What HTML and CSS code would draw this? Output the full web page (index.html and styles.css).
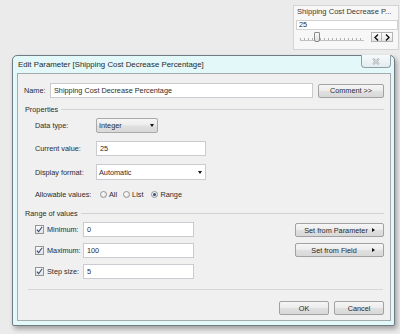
FILE: index.html
```html
<!DOCTYPE html>
<html>
<head>
<meta charset="utf-8">
<link rel="stylesheet" href="styles.css">
</head>
<body>
<div class="page">
  <div class="widget">
    <div class="w-title">Shipping Cost Decrease P...</div>
    <div class="w-input">25</div>
    <div class="w-slider-row">
      <div class="w-slider">
        <div class="w-ticks"></div>
        <div class="w-thumb"></div>
      </div>
      <div class="w-btns">
        <span class="w-btn"><svg width="5" height="7" viewBox="0 0 5 7"><path d="M4 0.5 L1 3.5 L4 6.5" fill="none" stroke="#111" stroke-width="1.4"/></svg></span>
        <span class="w-btn"><svg width="5" height="7" viewBox="0 0 5 7"><path d="M1 0.5 L4 3.5 L1 6.5" fill="none" stroke="#111" stroke-width="1.4"/></svg></span>
      </div>
    </div>
  </div>

  <div class="dialog">
    <div class="titlebar">
      <span class="title">Edit Parameter [Shipping Cost Decrease Percentage]</span>
      <span class="close"><svg width="8" height="7" viewBox="0 0 8 7"><path d="M1 0.8 L7 6.2 M7 0.8 L1 6.2" fill="none" stroke="#a9aeb1" stroke-width="2"/><path d="M1 0.8 L7 6.2 M7 0.8 L1 6.2" fill="none" stroke="#f2f5f6" stroke-width="0.7"/></svg></span>
    </div>
    <div class="content">
      <div class="name-row">
        <span class="name-label">Name:</span>
        <span class="field name-input">Shipping Cost Decrease Percentage</span>
        <span class="btn comment-btn">Comment &gt;&gt;</span>
      </div>

      <div class="group-head props-head"><span>Properties</span></div>

      <div class="prop-row dtype-row">
        <span class="plabel">Data type:</span>
        <span class="combo combo-btn dtype">Integer<i class="caret"></i></span>
      </div>
      <div class="prop-row cur-row">
        <span class="plabel">Current value:</span>
        <span class="field cur-input">25</span>
      </div>
      <div class="prop-row fmt-row">
        <span class="plabel">Display format:</span>
        <span class="combo combo-white fmt">Automatic<i class="caret"></i></span>
      </div>
      <div class="prop-row allow-row">
        <span class="plabel">Allowable values:</span>
        <span class="radio"></span><span class="rlabel r-all">All</span>
        <span class="radio"></span><span class="rlabel r-list">List</span>
        <span class="radio on"></span><span class="rlabel">Range</span>
      </div>

      <div class="group-head range-head"><span>Range of values</span></div>

      <div class="range">
        <div class="range-left">
          <div class="crow">
            <span class="cbox"><svg width="7" height="7" viewBox="0 0 7 7"><path d="M0.9 3.7 L2.6 5.7 L6.2 0.7" fill="none" stroke="#34497a" stroke-width="1.1"/></svg></span>
            <span class="clabel">Minimum:</span>
            <span class="field rinput">0</span>
          </div>
          <div class="crow">
            <span class="cbox"><svg width="7" height="7" viewBox="0 0 7 7"><path d="M0.9 3.7 L2.6 5.7 L6.2 0.7" fill="none" stroke="#34497a" stroke-width="1.1"/></svg></span>
            <span class="clabel">Maximum:</span>
            <span class="field rinput">100</span>
          </div>
          <div class="crow">
            <span class="cbox"><svg width="7" height="7" viewBox="0 0 7 7"><path d="M0.9 3.7 L2.6 5.7 L6.2 0.7" fill="none" stroke="#34497a" stroke-width="1.1"/></svg></span>
            <span class="clabel">Step size:</span>
            <span class="field rinput">5</span>
          </div>
        </div>
        <div class="range-right">
          <span class="btn set-btn set-param"><span class="set-text">Set from Parameter</span><i class="tri"></i></span>
          <span class="btn set-btn set-field"><span class="set-text">Set from Field</span><i class="tri"></i></span>
        </div>
      </div>

      <div class="sep"></div>

      <div class="footer">
        <span class="btn foot-btn">OK</span>
        <span class="btn foot-btn">Cancel</span>
      </div>
    </div>
  </div>
</div>
</body>
</html>
```

FILE: styles.css
```css
* { box-sizing: border-box; }
html, body { margin: 0; padding: 0; }
body {
  width: 400px;
  height: 334px;
  overflow: hidden;
  background: #ebebeb;
  font-family: "Liberation Sans", Arial, sans-serif;
  font-size: 7.3px;
  color: #2c2c2c;
}
.page { padding-top: 5px; }

/* ---------- top-right parameter widget ---------- */
.widget {
  margin-left: 293px;
  width: 106px;
  height: 45px;
  background: #f7f7f7;
  border: 1px solid #d4d4d4;
  padding: 0 0 0 2px;
}
.w-title {
  height: 11px;
  line-height: 11px;
  padding-left: 1px;
  font-size: 7.6px;
  color: #3a3a3a;
  white-space: nowrap;
}
.w-input {
  margin-top: 3px;
  width: 102px;
  height: 10px;
  line-height: 8px;
  padding-left: 2px;
  background: #fff;
  border: 1px solid #d2d2d2;
}
.w-slider-row {
  margin-top: 2px;
  height: 10px;
  display: flex;
  align-items: center;
}
.w-slider {
  position: relative;
  margin-left: 4px;
  width: 64px;
  height: 10px;
}
.w-ticks {
  margin-top: 6px;
  height: 3px;
  border-bottom: 1px solid #c0c0c0;
  background: repeating-linear-gradient(90deg, #b0b0b0 0 1px, transparent 1px 4px);
}
.w-thumb {
  position: absolute;
  left: 14px;
  top: 0;
  width: 6px;
  height: 10px;
  border: 1px solid #8a8a8a;
  border-radius: 1px 1px 2px 2px;
  background: linear-gradient(#fbfbfb, #dedede);
}
.w-btns {
  margin-left: 7px;
  display: flex;
}
.w-btn {
  width: 11px;
  height: 10px;
  display: flex;
  align-items: center;
  justify-content: center;
  border: 1px solid #b4b4b4;
  background: linear-gradient(#ffffff, #e4e4e4);
}
.w-btn + .w-btn { border-left: none; }

/* ---------- dialog ---------- */
.dialog {
  margin: 5px 0 0 12px;
  width: 383px;
  height: 271px;
  border: 1px solid #6f7c82;
  border-radius: 5px 5px 2px 2px;
  background: #e2f8f9;
  box-shadow: 2px 3px 5px rgba(0, 0, 0, 0.32);
  padding: 0 3px 4px 4px;
  display: flex;
  flex-direction: column;
}
.titlebar {
  height: 17px;
  display: flex;
  align-items: flex-start;
}
.title {
  padding-left: 1px;
  line-height: 17px;
  font-size: 7.85px;
  color: #2a2a2a;
  white-space: nowrap;
}
.close {
  margin-left: auto;
  margin-top: -1px;
  width: 30px;
  height: 13px;
  border: 1px solid #929ea4;
  border-top: none;
  border-radius: 0 0 4px 4px;
  background: linear-gradient(#f5fbfc, #e3ecef);
  display: flex;
  align-items: center;
  justify-content: center;
}
.content {
  height: 248px;
  border: 1px solid #a3abaf;
  background: #f0f0f0;
  padding-top: 9px;
  display: flex;
  flex-direction: column;
}

/* generic controls */
.field {
  height: 15px;
  background: #fff;
  border: 1px solid #c9cbd0;
  display: flex;
  align-items: center;
  white-space: nowrap;
}
.btn {
  display: flex;
  align-items: center;
  justify-content: center;
  height: 14px;
  border: 1px solid #a2a2a2;
  border-radius: 2px;
  background: linear-gradient(#f6f6f6 0%, #ececec 48%, #e0e0e0 52%, #d8d8d8 100%);
  color: #2a2a2a;
  white-space: nowrap;
}

/* name row */
.name-row {
  height: 15px;
  display: flex;
  align-items: center;
}
.name-label {
  width: 32px;
  padding-left: 6px;
}
.name-input {
  width: 263px;
  padding-left: 3px;
}
.comment-btn {
  margin-left: 5px;
  width: 66px;
}

/* group header */
.group-head {
  width: 366px;
  height: 10px;
  padding-left: 7px;
  display: flex;
  align-items: center;
  white-space: nowrap;
}
.group-head::after {
  content: "";
  flex: 1;
  margin-left: 3px;
  border-top: 1px solid #d3d3d3;
}
.props-head { margin-top: 6px; }
.range-head { margin-top: 8px; }

/* property rows */
.prop-row {
  height: 15px;
  display: flex;
  align-items: center;
}
.plabel {
  width: 78px;
  padding-left: 17px;
  white-space: nowrap;
}
.dtype-row { margin-top: 4px; }
.cur-row { margin-top: 8px; }
.fmt-row { margin-top: 8px; height: 16px; }
.allow-row { margin-top: 9px; height: 11px; }
.allow-row .plabel { width: 82px; }

.combo {
  position: relative;
  height: 15px;
  display: flex;
  align-items: center;
  padding-left: 2px;
  border: 1px solid #a9a9a9;
}
.combo-btn {
  width: 62px;
  border-radius: 2px;
  background: linear-gradient(#f6f6f6 0%, #ececec 48%, #e0e0e0 52%, #d8d8d8 100%);
}
.combo-white {
  width: 110px;
  height: 16px;
  background: #fff;
  border-color: #c9cbd0;
}
.caret {
  margin-left: auto;
  margin-right: 3px;
  width: 0;
  height: 0;
  border-left: 2.5px solid transparent;
  border-right: 2.5px solid transparent;
  border-top: 3px solid #111;
}
.cur-input {
  width: 110px;
  padding-left: 3px;
}

/* radios */
.radio {
  width: 7px;
  height: 7px;
  border-radius: 50%;
  border: 1px solid #959595;
  background: radial-gradient(circle at 40% 35%, #ffffff, #dadada);
  display: flex;
  align-items: center;
  justify-content: center;
}
.radio.on::after {
  content: "";
  width: 3px;
  height: 3px;
  border-radius: 50%;
  background: #2f4f86;
}
.rlabel { margin-left: 2px; }
.r-all { margin-right: 6px; }
.r-list { margin-right: 8px; }

/* range section */
.range {
  margin-top: 4px;
  width: 366px;
  display: flex;
}
.range-left {
  display: flex;
  flex-direction: column;
  gap: 6px;
}
.crow {
  height: 15px;
  display: flex;
  align-items: center;
  padding-left: 17px;
}
.cbox {
  width: 9px;
  height: 9px;
  border: 1px solid #959595;
  background: linear-gradient(#fafafa, #e4e4e4);
  display: flex;
  align-items: center;
  justify-content: center;
}
.clabel {
  width: 39px;
  padding-left: 3px;
  white-space: nowrap;
}
.rinput {
  width: 111px;
  padding-left: 3px;
}
.range-right {
  margin-left: auto;
  padding-top: 1px;
  display: flex;
  flex-direction: column;
  gap: 6px;
}
.set-btn { width: 89px; }
.set-text {
  flex: 1;
  text-align: center;
}
.tri {
  width: 0;
  height: 0;
  margin-right: 8px;
  border-top: 2.5px solid transparent;
  border-bottom: 2.5px solid transparent;
  border-left: 3px solid #111;
}
.set-param .set-text { padding-left: 4px; }

/* footer */
.sep {
  margin-top: 10px;
  margin-left: 10px;
  width: 355px;
  border-top: 1px solid #d6d6d6;
}
.footer {
  margin-top: 11px;
  width: 366px;
  display: flex;
  justify-content: flex-end;
  gap: 5px;
}
.foot-btn { width: 50px; }
```
